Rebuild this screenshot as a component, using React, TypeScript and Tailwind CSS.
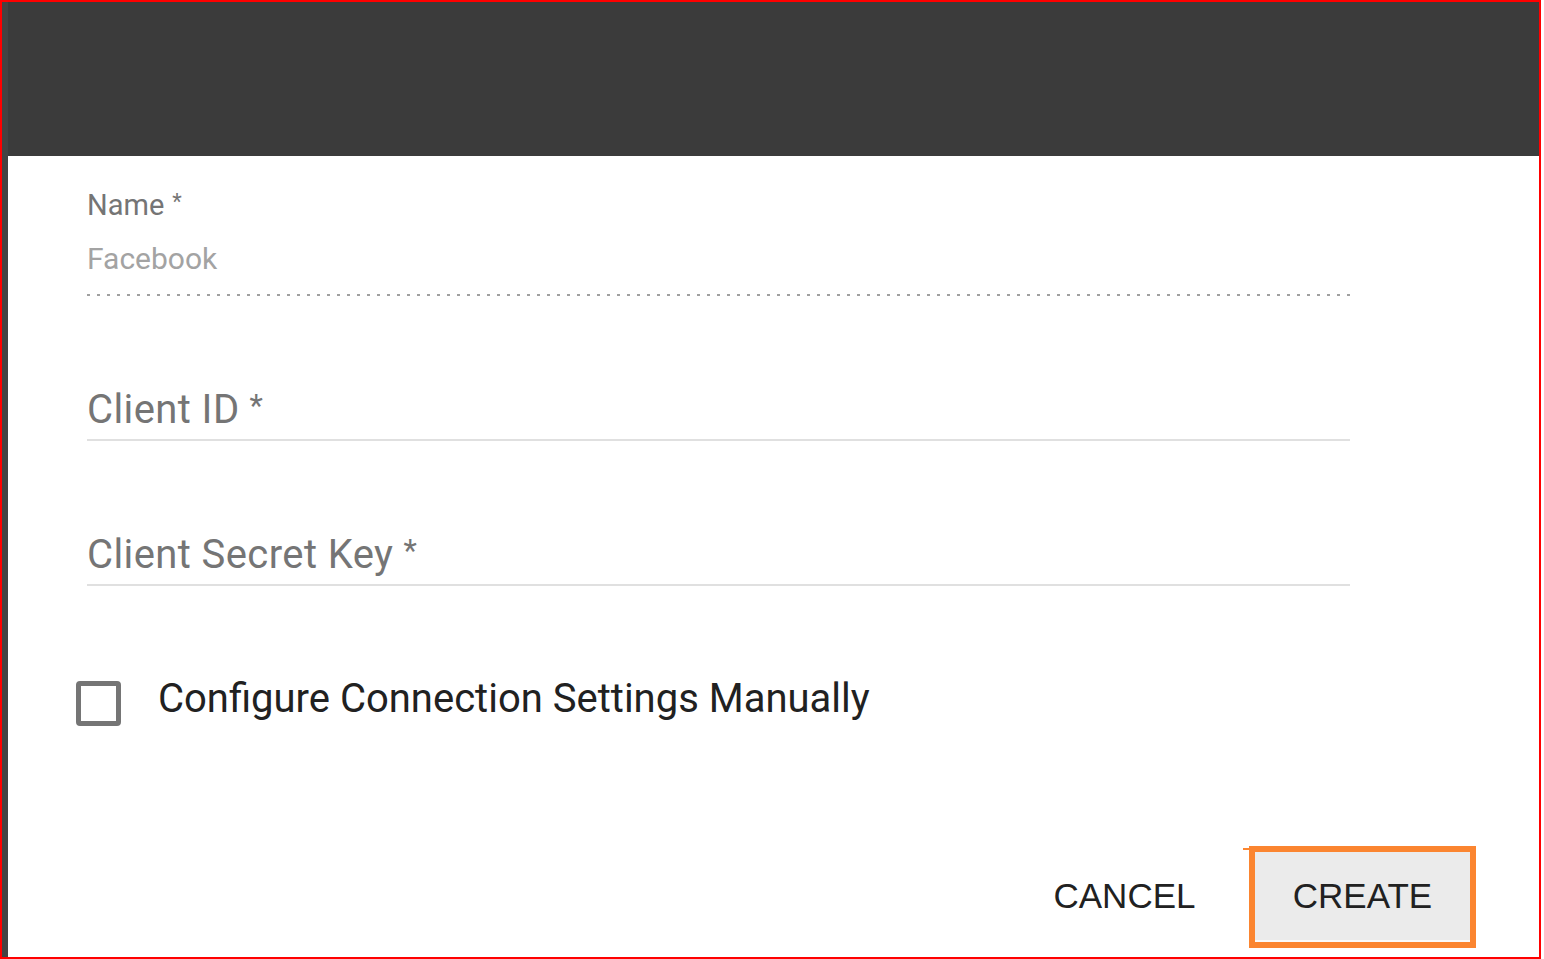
import React from 'react';

const TextField: React.FC<{ label: string; className?: string }> = ({ label, className = '' }) => (
  <div className={`w-[1263px] ${className}`}>
    <div className="text-[40px] leading-[40px] tracking-[0.4px] text-[#757575]">
      {label}
      <span className="ml-[10px] align-top text-[31px] leading-none">*</span>
    </div>
    <div className="mt-[9px] h-[2px] bg-[#e0e0e0]" />
  </div>
);

const App: React.FC = () => {
  return (
    <div className="w-[1541px] h-[959px] border-2 border-[#ff0000] bg-white font-['Roboto',sans-serif]">
      <div className="flex h-full">
        {/* thin strip left of the dialog */}
        <div className="w-[6px] bg-[#434343]" />

        <div className="flex flex-1 flex-col">
          <div className="h-[154px] bg-[#3b3b3b]" />

          <div className="flex flex-1 flex-col bg-white pl-[79px] pt-[35px]">
            {/* disabled name field */}
            <div className="w-[1263px]">
              <div className="h-[28px] text-[29px] leading-[28px] text-[#757575]">
                Name
                <span className="ml-[8px] align-top text-[22px] leading-none">*</span>
              </div>
              <div className="mt-[25px] text-[30px] leading-[29px] text-[#a3a3a3]">Facebook</div>
              <div className="mt-[21px] h-[2px] bg-[repeating-linear-gradient(to_right,#a0a0a0_0px,#a0a0a0_3px,transparent_3px,transparent_10px)]" />
            </div>

            <TextField label="Client ID" className="mt-[94px]" />
            <TextField label="Client Secret Key" className="mt-[94px]" />

            <label className="mt-[93px] ml-[-11px] flex items-start">
              <span className="mt-[2px] h-[45px] w-[45px] rounded-[4px] border-[5px] border-[#757575]" />
              <span className="ml-[37px] text-[40px] leading-[40px] text-[#212121]">
                Configure Connection Settings Manually
              </span>
            </label>

            <div className="mt-auto flex items-center justify-end pr-[63px] pb-[9px] font-['Liberation_Sans',Arial,sans-serif]">
              <button className="flex h-[90px] w-[215px] items-center justify-center pb-[3px] text-[35px] leading-[40px] text-[#212121]">
                CANCEL
              </button>
              <div className="relative ml-[17px]">
                <span className="absolute left-[-6px] top-[2px] h-[2px] w-[6px] bg-[#fb8530]" />
                <button className="flex h-[102px] w-[227px] items-center justify-center border-[6px] border-[#fb8530] bg-[#ebebeb] pb-[3px] text-[35px] leading-[40px] text-[#212121] shadow-[inset_0_-2px_0_#fafafa]">
                  CREATE
                </button>
              </div>
            </div>
          </div>
        </div>
      </div>
    </div>
  );
};

export default App;
